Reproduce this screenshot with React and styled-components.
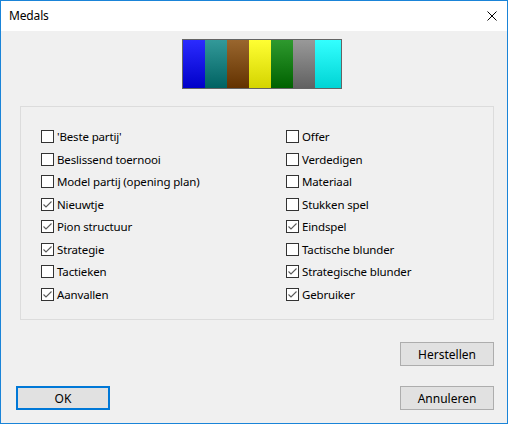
import React, { useState } from "react";
import styled, { createGlobalStyle } from "styled-components";

const swatches = [
  ["#2b2bff", "#0000c8"],
  ["#339999", "#006262"],
  ["#99662e", "#633200"],
  ["#ffff33", "#d4d400"],
  ["#2e992e", "#006200"],
  ["#999999", "#616161"],
  ["#33ffff", "#00d4d4"],
];

const left = [
  ["'Beste partij'", false],
  ["Beslissend toernooi", false],
  ["Model partij (opening plan)", false],
  ["Nieuwtje", true],
  ["Pion structuur", true],
  ["Strategie", true],
  ["Tactieken", false],
  ["Aanvallen", true],
];

const right = [
  ["Offer", false],
  ["Verdedigen", false],
  ["Materiaal", false],
  ["Stukken spel", false],
  ["Eindspel", true],
  ["Tactische blunder", false],
  ["Strategische blunder", true],
  ["Gebruiker", true],
];

const Check = ({ label, initial }) => {
  const [on, setOn] = useState(initial);
  return (
    <Row onClick={() => setOn(!on)}>
      <Box>
        {on && (
          <svg width="11" height="11" viewBox="0 0 11 11">
            <path d="M1.5 5.5 L4 8 L9.5 2.5" fill="none" stroke="#5a5a5a" strokeWidth="1.1" />
          </svg>
        )}
      </Box>
      <Label>{label}</Label>
    </Row>
  );
};

const App = () => {
  return (
    <>
      <GlobalStyle />
      <Window>
        <TitleBar>
          <Title>Medals</Title>
          <Close>
            <svg width="10" height="10" viewBox="0 0 10 10">
              <path d="M0.5 0.5 L9.5 9.5 M9.5 0.5 L0.5 9.5" stroke="#000" strokeWidth="1" />
            </svg>
          </Close>
        </TitleBar>

        <Body>
          <StripRow>
            <Strip>
              {swatches.map(([a, b], i) => (
                <Swatch key={i} $top={a} $bottom={b} $last={i === swatches.length - 1} />
              ))}
            </Strip>
          </StripRow>

          <Group>
            <Column>
              {left.map(([l, c]) => (
                <Check key={l} label={l} initial={c} />
              ))}
            </Column>
            <Column>
              {right.map(([l, c]) => (
                <Check key={l} label={l} initial={c} />
              ))}
            </Column>
          </Group>

          <ButtonRow>
            <Button>Herstellen</Button>
          </ButtonRow>
          <FooterRow>
            <Button $default>OK</Button>
            <Button>Annuleren</Button>
          </FooterRow>
        </Body>
      </Window>
    </>
  );
};

export default App;

const GlobalStyle = createGlobalStyle`
  body {
    margin: 0;
    font-family: "Segoe UI", "Noto Sans", sans-serif;
    font-size: 11.5px;
    letter-spacing: -0.15px;
    color: #000;
  }
`;

const Window = styled.div`
  width: 508px;
  height: 424px;
  box-sizing: border-box;
  border: 1px solid #1a84d8;
  background: #f0f0f0;
  display: flex;
  flex-direction: column;
`;

const TitleBar = styled.div`
  height: 30px;
  background: #fff;
  display: flex;
  align-items: center;
  justify-content: space-between;
  padding: 0 10px 0 8px;
`;

const Title = styled.div`
  font-size: 12px;
  padding-bottom: 1px;
`;

const Close = styled.div`
  width: 10px;
  height: 10px;
  display: flex;
`;

const Body = styled.div`
  flex: 1;
  display: flex;
  flex-direction: column;
`;

const StripRow = styled.div`
  display: flex;
  padding: 8px 0 0 181px;
`;

const Strip = styled.div`
  width: 160px;
  height: 50px;
  box-sizing: border-box;
  border: 1px solid #646464;
  display: flex;
`;

const Swatch = styled.div`
  width: 22px;
  flex: ${(p) => (p.$last ? 1 : "none")};
  background: linear-gradient(${(p) => p.$top}, ${(p) => p.$bottom});
`;

const Group = styled.div`
  margin: 17px 13px 0 19px;
  height: 214px;
  box-sizing: border-box;
  border: 1px solid #dcdcdc;
  display: grid;
  grid-template-columns: 245px 1fr;
  padding: 23px 0 0 20px;
`;

const Column = styled.div`
  display: flex;
  flex-direction: column;
`;

const Row = styled.div`
  height: 22.5px;
  display: flex;
  align-items: flex-start;
  gap: 3px;
  cursor: default;
`;

const Box = styled.div`
  width: 13px;
  height: 13px;
  box-sizing: border-box;
  border: 1px solid #333;
  background: #fff;
  display: flex;
  align-items: center;
  justify-content: center;
`;

const Label = styled.span`
  line-height: 13px;
  white-space: nowrap;
  color: #000;
`;

const ButtonRow = styled.div`
  display: flex;
  justify-content: flex-end;
  padding: 22px 13px 0 0;
`;

const FooterRow = styled.div`
  display: flex;
  justify-content: space-between;
  padding: 20px 13px 0 15px;
`;

const Button = styled.button`
  width: 94px;
  height: 24px;
  box-sizing: border-box;
  background: #e1e1e1;
  border: ${(p) => (p.$default ? "2px solid #0078d7" : "1px solid #adadad")};
  font-family: inherit;
  font-size: 12px;
  color: #000;
  padding: 0;
  margin: 0;
`;
